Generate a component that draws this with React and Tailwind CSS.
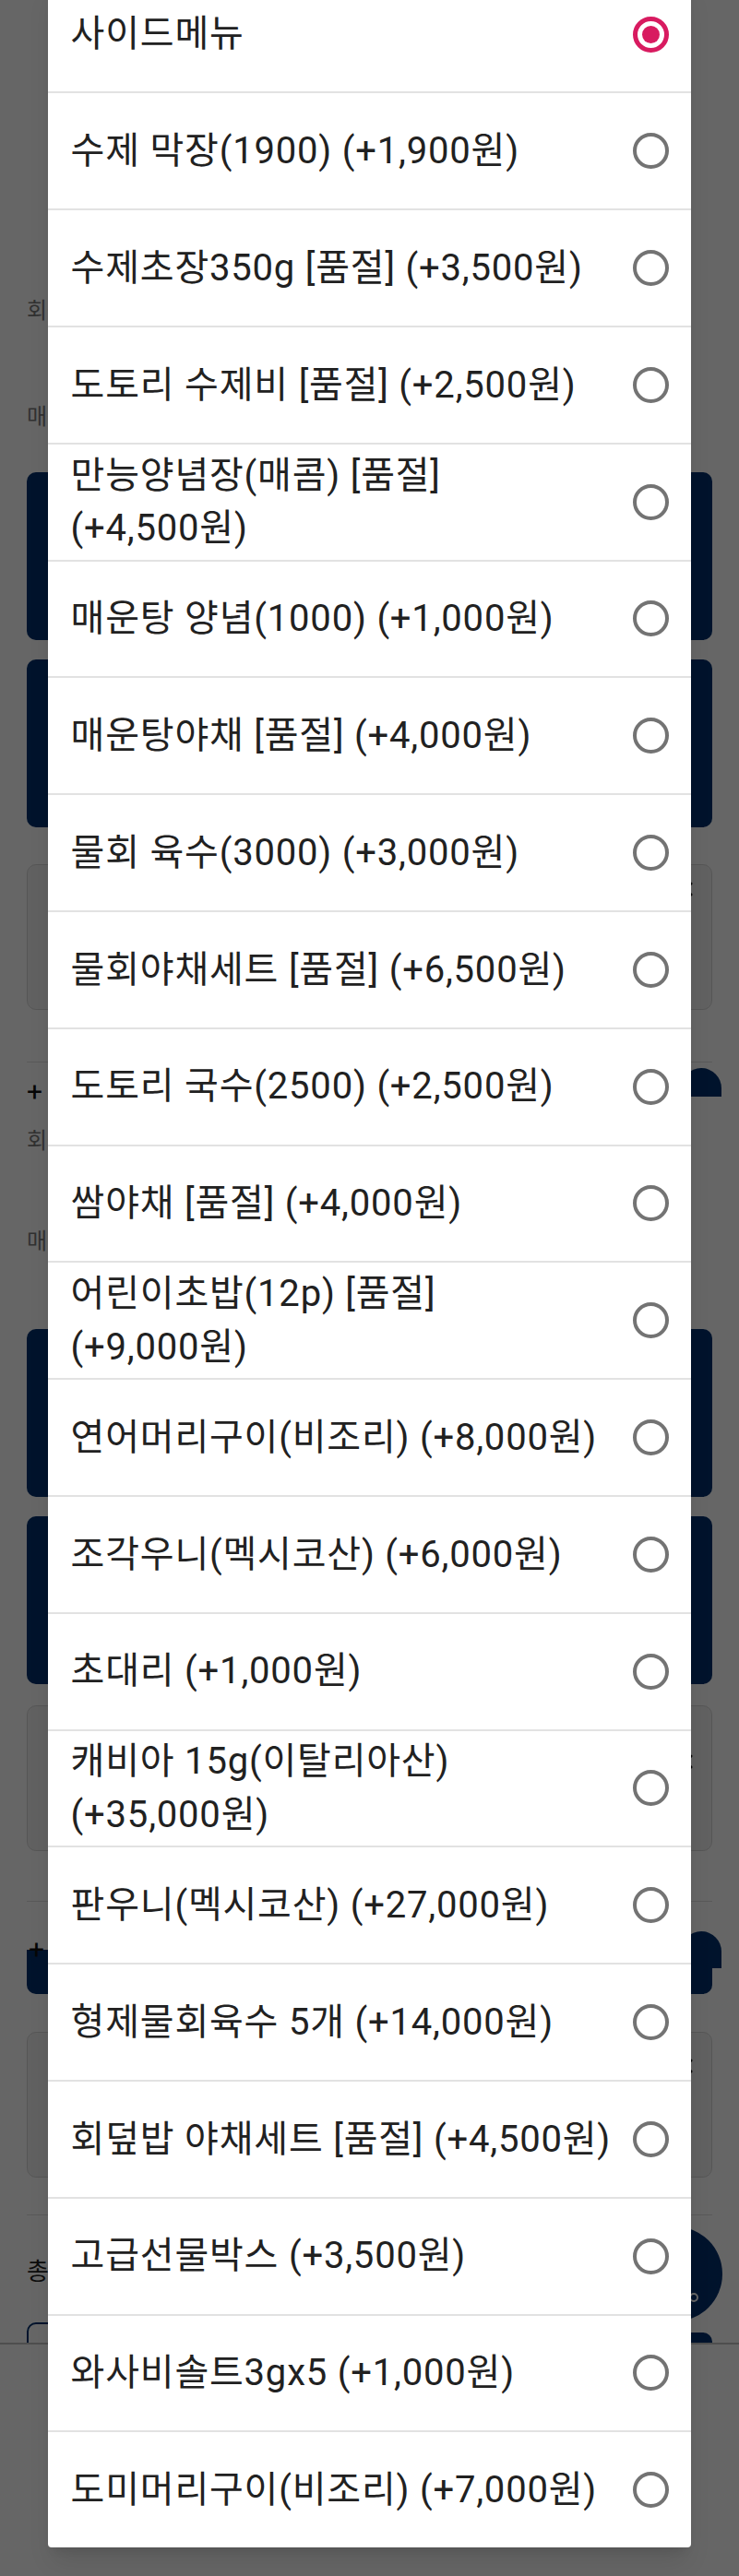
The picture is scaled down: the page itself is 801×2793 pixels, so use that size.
import React from 'react';
import { X } from 'lucide-react';

const OPTIONS = [
  { label: '사이드메뉴', checked: true },
  { label: '수제 막장(1900) (+1,900원)' },
  { label: '수제초장350g [품절] (+3,500원)' },
  { label: '도토리 수제비 [품절] (+2,500원)' },
  { label: '만능양념장(매콤) [품절] (+4,500원)' },
  { label: '매운탕 양념(1000) (+1,000원)' },
  { label: '매운탕야채 [품절] (+4,000원)' },
  { label: '물회 육수(3000) (+3,000원)' },
  { label: '물회야채세트 [품절] (+6,500원)' },
  { label: '도토리 국수(2500) (+2,500원)' },
  { label: '쌈야채 [품절] (+4,000원)' },
  { label: '어린이초밥(12p) [품절] (+9,000원)' },
  { label: '연어머리구이(비조리) (+8,000원)' },
  { label: '조각우니(멕시코산) (+6,000원)' },
  { label: '초대리 (+1,000원)' },
  { label: '캐비아 15g(이탈리아산) (+35,000원)' },
  { label: '판우니(멕시코산) (+27,000원)' },
  { label: '형제물회육수 5개 (+14,000원)' },
  { label: '회덮밥 야채세트 [품절] (+4,500원)' },
  { label: '고급선물박스 (+3,500원)' },
  { label: '와사비솔트3gx5 (+1,000원)' },
  { label: '도미머리구이(비조리) (+7,000원)' },
];

function Radio({ checked }) {
  if (checked) {
    return (
      <div className="flex h-[39px] w-[39px] shrink-0 items-center justify-center rounded-full border-[5px] border-[#d81b60]">
        <div className="h-[19px] w-[19px] rounded-full bg-[#d81b60]" />
      </div>
    );
  }
  return <div className="h-[39px] w-[39px] shrink-0 rounded-full border-[4.5px] border-[#737373]" />;
}

function OptionRow({ label, checked, last }) {
  return (
    <div
      className={
        'flex items-center pl-[24.6px] pr-[24.4px] ' +
        (last ? 'h-[124.8px]' : 'h-[126.8px] border-b-2 border-[#e2e2e2]')
      }
    >
      <span className="flex-1 break-keep pr-[17px] text-[40px] leading-[57.5px] tracking-[0.8px] text-[#212121]">
        {label}
      </span>
      <Radio checked={checked} />
    </div>
  );
}

function Card({ xTop }) {
  return (
    <div className="relative h-[158px] rounded-[10px] border border-[#d8d8d8] bg-[#f2f2f2]">
      <X className="absolute right-[16px] h-[24px] w-[24px] text-[#111]" strokeWidth={3} style={{ top: xTop }} />
    </div>
  );
}

export default function App() {
  return (
    <div className="relative h-[2793px] overflow-hidden bg-white font-['Roboto','Noto_Sans_CJK_KR',sans-serif]">
      {/* page behind the dialog */}
      <div className="flex flex-col px-[29px]">
        <p className="mt-[322px] text-[24px] leading-[30px] text-[#7a7a7a]">회원 할인</p>
        <p className="mt-[85px] text-[24px] leading-[30px] text-[#7a7a7a]">매장 선택</p>
        <div className="mt-[45px] h-[182px] rounded-[10px] bg-[#02316f]" />
        <div className="mt-[21px] h-[182px] rounded-[10px] bg-[#02316f]" />
        <div className="mt-[40px]">
          <Card xTop={14} />
        </div>
        <div className="mt-[56px] h-px bg-[#dedede]" />
        <div className="mt-[6px] flex h-[40px]">
          <span className="self-end text-[30px] leading-[28px] text-[#111]">+</span>
          <div className="ml-auto mr-[-10px] h-[31px] w-[44px] rounded-t-full bg-[#02316f]" />
        </div>

        <p className="mt-[24px] text-[24px] leading-[30px] text-[#7a7a7a]">회원 할인</p>
        <p className="mt-[79px] text-[24px] leading-[30px] text-[#7a7a7a]">매장 선택</p>
        <div className="mt-[80px] h-[182px] rounded-[10px] bg-[#02316f]" />
        <div className="mt-[21px] h-[182px] rounded-[10px] bg-[#02316f]" />
        <div className="mt-[23px]">
          <Card xTop={48} />
        </div>
        <div className="mt-[54px] h-px bg-[#dedede]" />
        <div className="relative mt-[32px] h-[68px]">
          <div className="mt-[20px] h-[48px] rounded-b-[10px] bg-[#02316f]" />
          <div className="absolute right-[-10px] top-0 h-[40px] w-[44px] rounded-t-full bg-[#02316f]" />
          <span className="absolute left-[2px] top-[6px] text-[30px] leading-[28px] text-[#111]">+</span>
        </div>
        <div className="mt-[41px]">
          <Card xTop={24} />
        </div>
        <div className="mt-[40px] h-px bg-[#dedede]" />
        <p className="mt-[46px] text-[26px] leading-[30px] text-[#222]">총 주문금액</p>
        <div className="mt-[40px] flex gap-[16px]">
          <div className="h-[60px] flex-1 rounded-[10px] border-2 border-[#02316f]" />
          <div className="mt-[11px] h-[60px] flex-1 rounded-[10px] bg-[#02316f]" />
        </div>
      </div>

      {/* floating round button */}
      <div className="absolute right-[18px] top-[2414px] flex h-[103px] w-[103px] items-center justify-center rounded-full bg-[#02316f]">
        <div className="ml-[40px] mt-[50px] h-[10px] w-[10px] rounded-full border-2 border-white" />
      </div>

      {/* fixed bottom bar */}
      <div className="absolute inset-x-0 bottom-0 h-[253px] border-t-2 border-[#c4c4c4] bg-white" />

      {/* dim overlay */}
      <div className="absolute inset-0 bg-black/60" />

      {/* option dialog */}
      <div className="absolute left-[52px] top-[-25.4px] w-[697px] overflow-hidden rounded-[4px] bg-white shadow-xl">
        {OPTIONS.map((o, i) => (
          <OptionRow key={o.label} label={o.label} checked={o.checked} last={i === OPTIONS.length - 1} />
        ))}
      </div>
    </div>
  );
}
